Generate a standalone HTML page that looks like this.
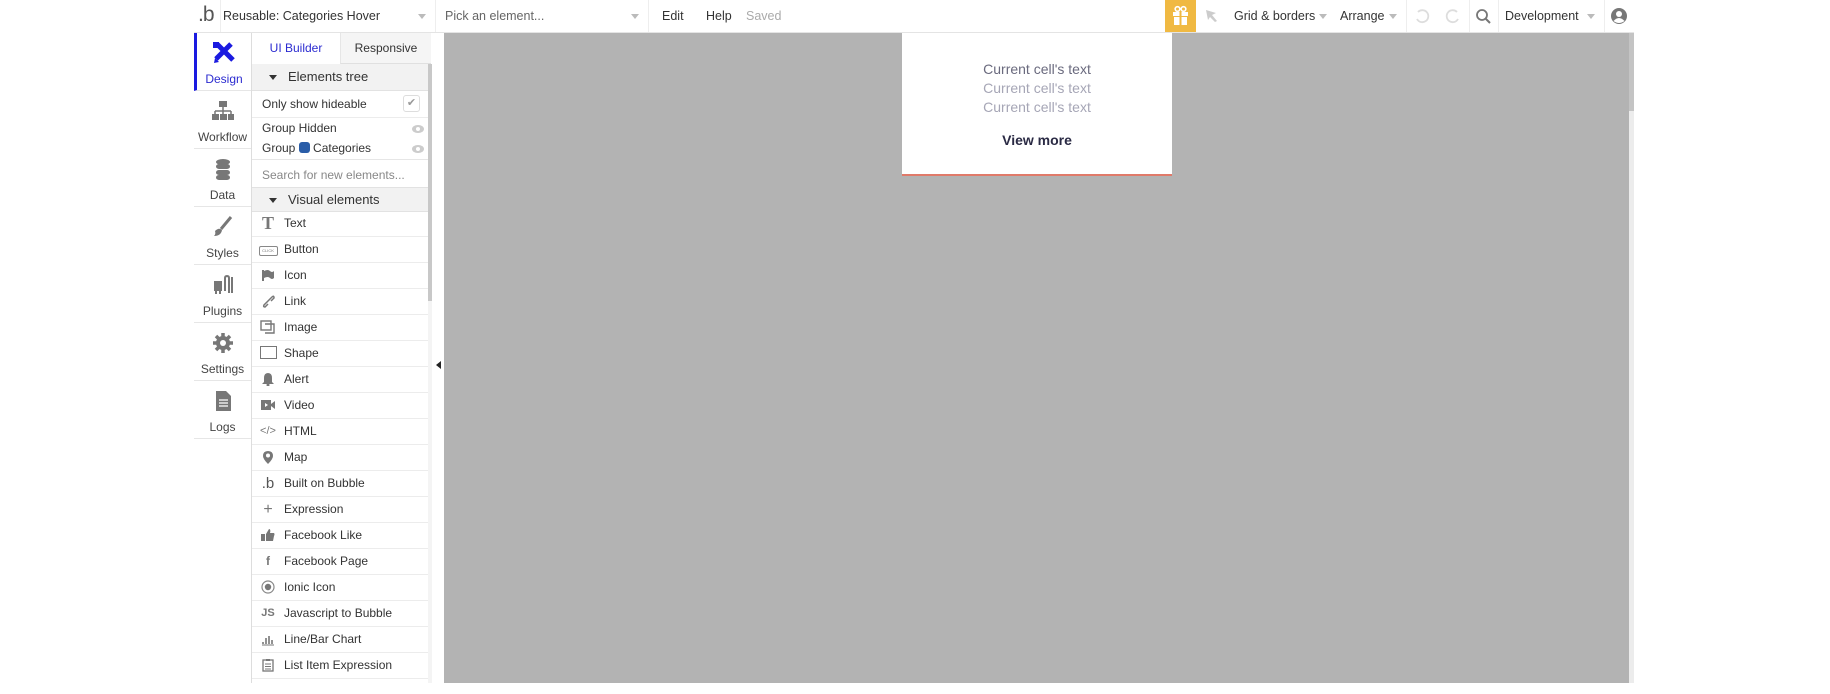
<!DOCTYPE html>
<html><head><meta charset="utf-8"><style>
*{box-sizing:border-box;margin:0;padding:0}
body{width:1830px;height:694px;background:#fff;position:relative;overflow:hidden;font-family:"Liberation Sans",sans-serif;font-size:12.5px;color:#333}
.a{position:absolute}
.tb{left:194px;top:0;width:1440px;height:33px;border-bottom:1px solid #e4e4e4}
.vd{position:absolute;top:0;width:1px;height:32px;background:#eee}
.arr{position:absolute;width:0;height:0;border-left:4px solid transparent;border-right:4px solid transparent;border-top:5px solid #bbb}
.side{left:194px;top:33px;width:57px;height:410px}
.si{position:absolute;left:0;width:57px;height:58px;border-bottom:1px solid #e6e6e6;text-align:center;color:#444;font-size:12px}
.si span{position:absolute;left:0;right:0;bottom:4px}
.si svg{position:absolute;left:17px;top:8px}
.panel{left:251px;top:33px;width:180px;height:650px;border-left:1px solid #ddd;border-right:1px solid #ddd}
.row{position:absolute;left:0;width:176px;height:26px;border-bottom:1px solid #ececec;line-height:25px;padding-left:32px;font-size:12px;color:#333}
.row i{position:absolute;left:6px;top:0;width:20px;text-align:center;font-style:normal;color:#777}
.row i svg{vertical-align:-3px}
.hdr{position:absolute;left:0;width:176px;background:#f2f2f2;border-bottom:1px solid #e2e2e2;font-size:13px;color:#333;padding-left:36px}
.hdr:before{content:"";position:absolute;left:17px;top:50%;margin-top:-2px;border-left:4px solid transparent;border-right:4px solid transparent;border-top:5px solid #333}
.ct{position:absolute;left:0;width:270px;text-align:center;font-size:14px}
</style></head><body>

<div class="a tb">
  <div class="a" style="left:4px;top:3px;font-size:21px;color:#555;letter-spacing:-1px">.b</div>
  <div class="vd" style="left:26px"></div>
  <div class="a" style="left:29px;top:9px;font-size:12.5px;color:#333">Reusable: Categories Hover</div>
  <div class="arr" style="left:224px;top:14px"></div>
  <div class="vd" style="left:241px"></div>
  <div class="a" style="left:251px;top:9px;color:#666">Pick an element...</div>
  <div class="arr" style="left:437px;top:14px"></div>
  <div class="vd" style="left:454px"></div>
  <div class="a" style="left:468px;top:9px">Edit</div>
  <div class="a" style="left:512px;top:9px">Help</div>
  <div class="a" style="left:552px;top:9px;color:#aaa">Saved</div>
  <div class="a" style="left:971px;top:0;width:31px;height:32px;background:#f0b942">
    <svg width="31" height="32"><rect x="8" y="12" width="15" height="4" fill="#fff"/><rect x="9" y="17" width="13" height="8" fill="#fff"/><rect x="14.5" y="12" width="2" height="13" fill="#f0b942"/><circle cx="12.5" cy="9" r="2.3" fill="none" stroke="#fff" stroke-width="1.6"/><circle cx="18.5" cy="9" r="2.3" fill="none" stroke="#fff" stroke-width="1.6"/></svg>
  </div>
  <svg class="a" style="left:1010px;top:8px" width="16" height="16"><path d="M2 2 L12 5 L8 7 L13 13 L11 14 L6 9 L4 12 Z" fill="#ccc"/></svg>
  <div class="a" style="left:1040px;top:9px">Grid &amp; borders</div>
  <div class="arr" style="left:1125px;top:14px"></div>
  <div class="a" style="left:1146px;top:9px">Arrange</div>
  <div class="arr" style="left:1195px;top:14px"></div>
  <div class="vd" style="left:1212px"></div>
  <svg class="a" style="left:1219px;top:7px" width="18" height="18"><path d="M5 5 A6 6 0 1 1 4 12" fill="none" stroke="#ddd" stroke-width="1.8"/></svg>
  <svg class="a" style="left:1250px;top:7px" width="18" height="18"><path d="M13 5 A6 6 0 1 0 14 12" fill="none" stroke="#ddd" stroke-width="1.8"/></svg>
  <div class="vd" style="left:1275px"></div>
  <svg class="a" style="left:1281px;top:8px" width="18" height="18"><circle cx="7" cy="7" r="5" fill="none" stroke="#777" stroke-width="1.8"/><path d="M11 11 L15 15" stroke="#777" stroke-width="2"/></svg>
  <div class="vd" style="left:1304px"></div>
  <div class="a" style="left:1311px;top:9px">Development</div>
  <div class="arr" style="left:1393px;top:14px"></div>
  <div class="vd" style="left:1410px"></div>
  <svg class="a" style="left:1416px;top:7px" width="18" height="18"><circle cx="9" cy="9" r="8" fill="#777"/><circle cx="9" cy="7" r="3" fill="#fff"/><path d="M3.5 14 Q9 8 14.5 14 Q9 18 3.5 14Z" fill="#fff"/></svg>
</div>

<div class="a side">
  <div class="si" style="top:0;border-left:3px solid #1a1ae0;color:#2b2bd0">
    <svg width="24" height="24" style="left:15px"><path d="M5 3 L21 19" stroke="#1a1ae0" stroke-width="5"/><path d="M19 3 L4 18" stroke="#1a1ae0" stroke-width="5"/><path d="M2 22 L3 17 L7 21Z" fill="#1a1ae0"/><rect x="1" y="1" width="6" height="6" fill="#1a1ae0"/></svg><span>Design</span></div>
  <div class="si" style="top:58px"><svg width="24" height="24"><rect x="8" y="2" width="8" height="6" fill="#777"/><path d="M12 8 V12 M4 12 H20 M4 12V15 M12 12V15 M20 12V15" stroke="#777" stroke-width="1.5"/><rect x="1" y="15" width="7" height="6" fill="#777"/><rect x="9" y="15" width="7" height="6" fill="#777"/><rect x="17" y="15" width="6" height="6" fill="#777"/></svg><span>Workflow</span></div>
  <div class="si" style="top:116px"><svg width="24" height="24"><ellipse cx="12" cy="5" rx="7" ry="3" fill="#777"/><rect x="5" y="7" width="14" height="5" rx="3" fill="#777"/><rect x="5" y="13" width="14" height="5" rx="3" fill="#777"/><rect x="5" y="18" width="14" height="5" rx="3" fill="#777"/></svg><span>Data</span></div>
  <div class="si" style="top:174px"><svg width="24" height="24"><path d="M20 2 L10 14" stroke="#777" stroke-width="3"/><path d="M4 16 Q8 12 11 15 Q10 21 3 21 Q5 19 4 16Z" fill="#777"/></svg><span>Styles</span></div>
  <div class="si" style="top:232px"><svg width="24" height="24"><rect x="3" y="8" width="8" height="10" fill="#777"/><path d="M5 18v3M9 18v3M14 18 V5 Q14 3 16 3 Q18 3 18 5 V20 M21 4 V20" stroke="#777" stroke-width="2" fill="none"/></svg><span>Plugins</span></div>
  <div class="si" style="top:290px"><svg width="24" height="24"><circle cx="12" cy="12" r="7" fill="#777"/><path d="M12 2V22M2 12H22M5 5L19 19M19 5L5 19" stroke="#777" stroke-width="3.5"/><circle cx="12" cy="12" r="3" fill="#fff"/></svg><span>Settings</span></div>
  <div class="si" style="top:348px"><svg width="24" height="24"><path d="M5 2 H15 L20 7 V22 H5Z" fill="#777"/><path d="M8 11H17M8 14H17M8 17H17" stroke="#fff" stroke-width="1.2"/></svg><span>Logs</span></div>
</div>

<div class="a panel">
  <div class="a" style="left:0;top:0;width:88px;height:31px;line-height:30px;text-align:center;color:#2b2bd0;font-size:12px;background:#fff">UI Builder</div>
  <div class="a" style="left:88px;top:0;width:91px;height:31px;line-height:30px;text-align:center;font-size:12px;background:#f5f5f5;border-left:1px solid #e6e6e6;border-bottom:1px solid #e0e0e0">Responsive</div>
  <div class="hdr" style="top:31px;height:27px;line-height:26px">Elements tree</div>
  <div class="row" style="top:58px;padding-left:10px;height:27px;line-height:27px">Only show hideable
    <div class="a" style="left:151px;top:4px;width:17px;height:17px;border:1px solid #ddd;border-radius:3px;color:#999;line-height:15px;text-align:center;font-size:11px">✔</div></div>
  <div class="a" style="left:10px;top:88px;font-size:12px">Group Hidden</div>
  <div class="a" style="left:10px;top:108px;font-size:12px">Group <span style="display:inline-block;width:11px;height:11px;border-radius:3px;background:#2a5da8;vertical-align:-1px"></span> Categories</div>
  <svg class="a" style="left:160px;top:92px" width="12" height="8"><ellipse cx="6" cy="4" rx="6" ry="4" fill="#ccc"/><circle cx="6" cy="4" r="2" fill="#fff"/></svg>
  <svg class="a" style="left:160px;top:112px" width="12" height="8"><ellipse cx="6" cy="4" rx="6" ry="4" fill="#ccc"/><circle cx="6" cy="4" r="2" fill="#fff"/></svg>
  <div class="a" style="left:0;top:126px;width:176px;border-top:1px solid #e6e6e6"></div>
  <div class="a" style="left:10px;top:135px;color:#888;font-size:12px">Search for new elements...</div>
  <div class="hdr" style="top:154px;height:25px;line-height:24px;border-top:1px solid #e2e2e2">Visual elements</div>
  <div class="row" style="top:178px"><i style="font-family:'Liberation Serif';font-size:18px;font-weight:bold">T</i>Text</div>
  <div class="row" style="top:204px"><i><span style="display:inline-block;width:19px;height:10px;border:1px solid #888;border-radius:2px;font-size:4px;line-height:8px;vertical-align:1px">CLICK</span></i>Button</div>
  <div class="row" style="top:230px"><i><svg width="14" height="14"><path d="M2 2V13" stroke="#777" stroke-width="2"/><path d="M3 3 Q7 1 9 3 Q11 5 13 3 V10 Q11 12 9 10 Q7 8 3 10Z" fill="#777"/></svg></i>Icon</div>
  <div class="row" style="top:256px"><i><svg width="14" height="14"><path d="M6 8 L3 11 Q2 13 4 13 L7 10 M8 6 L11 3 Q13 1 13 4 L10 7 M5 9 L9 5" stroke="#777" stroke-width="1.5" fill="none"/></svg></i>Link</div>
  <div class="row" style="top:282px"><i><svg width="16" height="14"><rect x="1" y="1" width="10" height="9" fill="none" stroke="#777" stroke-width="1.4"/><path d="M5 4 H14 V13 H5" fill="none" stroke="#777" stroke-width="1.4"/></svg></i>Image</div>
  <div class="row" style="top:308px"><i><span style="display:inline-block;width:17px;height:13px;border:1px solid #777;vertical-align:-2px"></span></i>Shape</div>
  <div class="row" style="top:334px"><i><svg width="14" height="14"><path d="M7 1 Q3 1 3 6 V10 L1 12 H13 L11 10 V6 Q11 1 7 1Z" fill="#777"/><circle cx="7" cy="13" r="1.5" fill="#777"/></svg></i>Alert</div>
  <div class="row" style="top:360px"><i><svg width="16" height="14"><rect x="1" y="2" width="10" height="10" fill="#777"/><path d="M11 6 L15 3 V11 L11 8Z" fill="#777"/><path d="M5 5 L8 7 L5 9Z" fill="#fff"/></svg></i>Video</div>
  <div class="row" style="top:386px"><i style="font-size:11px">&lt;/&gt;</i>HTML</div>
  <div class="row" style="top:412px"><i><svg width="12" height="14"><path d="M6 1 Q1 1 1 6 Q1 9 6 14 Q11 9 11 6 Q11 1 6 1Z" fill="#777"/><circle cx="6" cy="5.5" r="2" fill="#fff"/></svg></i>Map</div>
  <div class="row" style="top:438px"><i style="font-size:15px;color:#555">.b</i>Built on Bubble</div>
  <div class="row" style="top:464px"><i style="font-size:16px">+</i>Expression</div>
  <div class="row" style="top:490px"><i><svg width="16" height="14"><rect x="1" y="6" width="4" height="7" fill="#777"/><path d="M6 6 L9 1 Q11 1 10 5 H14 Q15 6 14 8 L13 13 H6Z" fill="#777"/></svg></i>Facebook Like</div>
  <div class="row" style="top:516px"><i style="font-weight:bold">f</i>Facebook Page</div>
  <div class="row" style="top:542px"><i><svg width="14" height="14"><circle cx="7" cy="7" r="6" fill="none" stroke="#888" stroke-width="1.2"/><circle cx="7" cy="7" r="3.2" fill="#777"/></svg></i>Ionic Icon</div>
  <div class="row" style="top:568px"><i style="font-weight:bold;font-size:11px">JS</i>Javascript to Bubble</div>
  <div class="row" style="top:594px"><i><svg width="14" height="14"><path d="M2 12V10M5 12V6M8 12V4M11 12V8" stroke="#777" stroke-width="1.6"/><path d="M1 13H13" stroke="#777"/></svg></i>Line/Bar Chart</div>
  <div class="row" style="top:620px"><i><svg width="12" height="14"><rect x="1" y="2" width="10" height="11" fill="none" stroke="#777" stroke-width="1.3"/><rect x="4" y="1" width="4" height="2" fill="#777"/><path d="M3 6H9M3 8.5H9M3 11H9" stroke="#777"/></svg></i>List Item Expression</div>
  <div class="a" style="left:176px;top:31px;width:4px;height:619px;background:#f4f4f4"></div>
  <div class="a" style="left:176px;top:31px;width:4px;height:237px;background:#c8c8c8"></div>
</div>
<div class="a" style="left:436px;top:361px;border-top:4px solid transparent;border-bottom:4px solid transparent;border-right:5px solid #222"></div>

<div class="a" style="left:444px;top:33px;width:1185px;height:650px;background:#b3b3b3"></div>
<div class="a" style="left:1629px;top:33px;width:5px;height:650px;background:#ececec"></div>
<div class="a" style="left:1629px;top:33px;width:5px;height:78px;background:#c4c4c4"></div>

<div class="a" style="left:902px;top:33px;width:270px;height:143px;background:#fff;border-bottom:2px solid #e07a6a">
  <div class="ct" style="top:28px;color:#6a6a7e">Current cell's text</div>
  <div class="ct" style="top:47px;color:#a6a6b6">Current cell's text</div>
  <div class="ct" style="top:66px;color:#a6a6b6">Current cell's text</div>
  <div class="ct" style="top:99px;color:#2a2a44;font-weight:bold">View more</div>
</div>
</body></html>
